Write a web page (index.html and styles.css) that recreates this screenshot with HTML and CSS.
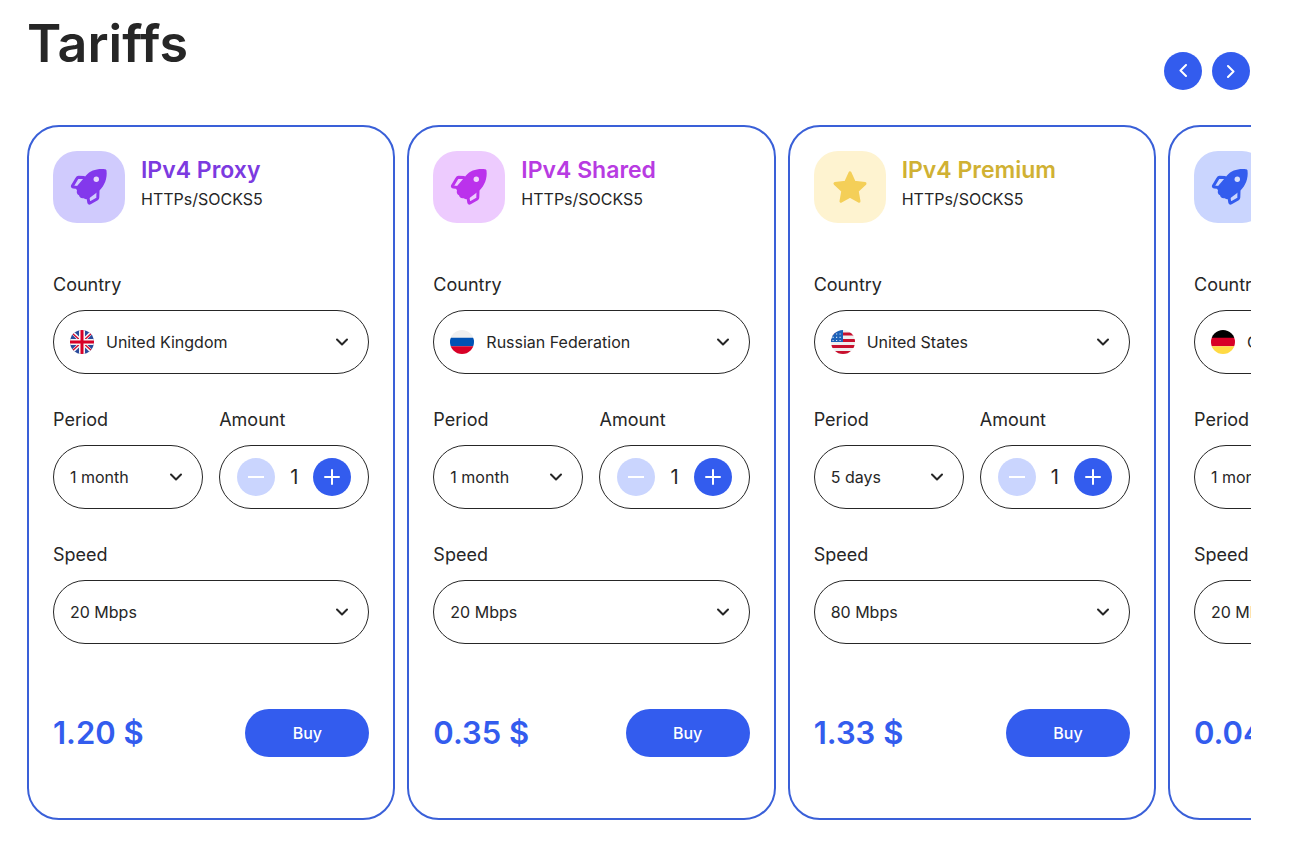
FILE: index.html
```html
<!DOCTYPE html>
<html lang="en">
<head>
<meta charset="utf-8">
<title>Tariffs</title>
<link rel="stylesheet" href="styles.css">
</head>
<body>
<svg class="sprite" aria-hidden="true">
  <symbol id="rocket" viewBox="0 0 40 40">
    <path fill="currentColor" d="M36 2.200C28 1.400 21.500 3.300 17 8.500L8.500 18.500C6.800 20.500 6.800 22 8 23.500C7.300 25.500 8 27.500 10 28.300C10.500 30.500 12.500 31.800 14.800 31.200C16.500 32.600 18.500 32.400 20.500 31L30.500 23.500C35.500 18.500 38.500 11.500 37.500 3.500Q37.200 2.300 36 2.200Z"/>
    <circle class="window" cx="27.300" cy="12.300" r="2.700"/>
    <path class="fin" d="M15 10.500L9.500 10.300Q8.500 10.300 8 11.200L3.500 18.700Q3 19.800 4.200 20L9 20.500M29 24L28.800 30.500Q28.800 31.500 28 32L21 36Q20 36.500 19.800 35.500L19 30.500"/>
  </symbol>
  <symbol id="star" viewBox="0 0 40 40">
    <path fill="currentColor" stroke="currentColor" stroke-width="3" stroke-linejoin="round" d="M20 5.800L24.200 15.200L35 16.600L27.200 23.900L29 34.200L20 29.300L11 34.200L12.800 23.900L5 16.600L15.800 15.200Z"/>
  </symbol>
  <symbol id="chevron" viewBox="0 0 14 14"><path class="line" d="M2 4.500L7 9.500L12 4.500"/></symbol>
  <symbol id="left" viewBox="0 0 14 14"><path class="line" d="M10 1L4.500 6.500L10 12"/></symbol>
  <symbol id="right" viewBox="0 0 14 14"><path class="line" d="M4 2L9.500 7.500L4 13"/></symbol>
  <symbol id="minus" viewBox="0 0 16 16"><path class="line" d="M0.500 8H15.500"/></symbol>
  <symbol id="plus" viewBox="0 0 16 16"><path class="line" d="M1 8H15M8 1V15"/></symbol>
  <clipPath id="round"><circle cx="12" cy="12" r="12"/></clipPath>
  <symbol id="gb" viewBox="0 0 24 24"><g clip-path="url(#round)">
    <path fill="#2a4b9b" d="M0 0H24V24H0Z"/>
    <path stroke="#f4f4f4" stroke-width="3.400" d="M2 2L22 22M22 2L2 22"/>
    <path stroke="#d80027" stroke-width="1.200" d="M2 3L22 21M22 3L2 21"/>
    <path stroke="#f4f4f4" stroke-width="6" d="M12 0V24M0 12H24"/>
    <path stroke="#d80027" stroke-width="3" d="M12 0V24M0 12H24"/></g></symbol>
  <symbol id="ru" viewBox="0 0 24 24"><g clip-path="url(#round)">
    <path fill="#f0f0f0" d="M0 0H24V8H0Z"/><path fill="#0052b4" d="M0 7.800H24V16.200H0Z"/><path fill="#d80027" d="M0 16.200H24V24H0Z"/></g></symbol>
  <symbol id="de" viewBox="0 0 24 24"><g clip-path="url(#round)">
    <path fill="#000" d="M0 0H24V8H0Z"/><path fill="#d80027" d="M0 7.800H24V16.200H0Z"/><path fill="#ffda44" d="M0 16.200H24V24H0Z"/></g></symbol>
  <symbol id="us" viewBox="0 0 24 24"><g clip-path="url(#round)">
    <path fill="#f0f0f0" d="M0 0H24V24H0Z"/>
    <path stroke="#c8102e" stroke-width="3" d="M0 4H24M0 10.500H24M0 16.500H24M0 22.500H24"/>
    <path fill="#1d62b8" d="M0 0H12V12H0Z"/>
    <path stroke="#cfe0f5" stroke-width="1.200" stroke-dasharray="1.200 2.300" d="M1.500 4H12M1.500 7.300H12M1.500 10.500H12"/></g></symbol>
</svg>
<main class="tariffs">
  <header class="head">
    <h1 class="title">Tariffs</h1>
    <nav class="arrows" aria-label="Tariff slider">
      <button class="round" type="button" aria-label="Previous"><svg class="arrow"><use href="#left"/></svg></button>
      <button class="round" type="button" aria-label="Next"><svg class="arrow"><use href="#right"/></svg></button>
    </nav>
  </header>
  <div class="slider" id="slider"></div>
</main>
<script src="script.js"></script>
</body>
</html>
```
FILE: styles.css
```css
* { box-sizing: border-box; }
body {
  margin: 0;
  background: #fff;
  color: #262626;
  font-family: Inter, "Liberation Sans", sans-serif;
  font-size: 16px;
}
button, select { font: inherit; color: inherit; }
button { border: 0; padding: 0; cursor: pointer; }
.sprite { position: absolute; width: 0; height: 0; }
.line { fill: none; stroke: currentColor; stroke-width: 2; stroke-linecap: round; stroke-linejoin: round; }
.tariffs { padding: 8px 60px 24px 27px; }
.head { display: flex; justify-content: space-between; align-items: flex-end; padding-bottom: 35px; }
.title { margin: 0 0 10px; font-size: 52px; line-height: 72px; font-weight: 600; }
.arrows { display: flex; gap: 10px; padding-right: 1px; }
.round {
  display: grid;
  place-items: center;
  width: 38px;
  height: 38px;
  border-radius: 50%;
  background: #335cee;
  color: #fff;
}
.round:disabled { background: #cad5fe; cursor: default; }
.arrow { width: 14px; height: 14px; }
.slider {
  display: grid;
  grid-auto-flow: column;
  grid-auto-columns: calc((100% - 119px) / 3);
  gap: 12px;
  overflow: hidden;
}
.card {
  display: flex;
  flex-direction: column;
  border: 2px solid #3a60d8;
  border-radius: 32px;
  padding: 24px 24px 61px;
}
.top { display: flex; gap: 16px; margin-bottom: 48px; }
.badge {
  display: grid;
  place-items: center;
  width: 72px;
  height: 72px;
  border-radius: 24px;
}
.badge svg { width: 40px; height: 40px; }
.fin { fill: none; stroke: currentColor; stroke-width: 3; stroke-linejoin: round; stroke-linecap: round; }
.violet .badge { background: #d0cbfd; color: #8338ec; }
.violet .name { color: #7c3ae0; }
.pink .badge { background: #edcbfe; color: #bb32ec; }
.pink .name { color: #b83be2; }
.gold .badge { background: #fef3d0; color: #f4cf58; }
.gold .name { color: #d0b133; }
.blue .badge { background: #cad5fe; color: #335cee; }
.blue .name { color: #335cee; }
.window { fill: #fff; opacity: 0.8; }
.name { margin: 2px 0 0; font-size: 23px; line-height: 34px; font-weight: 600; white-space: nowrap; }
.protocol { margin: 0; font-size: 16px; line-height: 24px; }
.fields { display: grid; grid-template-columns: 1fr 1fr; gap: 32px 16px; margin-bottom: 65px; }
.field { min-width: 0; }
.wide { grid-column: 1 / -1; }
.label { display: block; margin-bottom: 12px; font-size: 18px; line-height: 27px; }
.box {
  display: flex;
  align-items: center;
  height: 64px;
  border: 1px solid #262626;
  border-radius: 32px;
}
.pick { display: grid; align-items: center; }
.pick > * { grid-area: 1 / 1; }
.pick select {
  appearance: none;
  width: 100%;
  height: 100%;
  border: 0;
  border-radius: 32px;
  padding: 0 40px 0 16px;
  background: transparent;
}
.pick .flag { width: 24px; height: 24px; margin-left: 16px; pointer-events: none; }
.flagged select { padding-left: 52px; }
.pick .caret { width: 14px; height: 14px; margin-right: 19px; justify-self: end; pointer-events: none; }
.count { justify-content: space-between; padding: 0 17px; }
.count svg { width: 16px; height: 16px; }
.amount { font-size: 20px; line-height: 24px; }
.bottom { display: flex; justify-content: space-between; align-items: center; }
.price { color: #335cee; font-size: 31px; line-height: 48px; font-weight: 600; white-space: nowrap; }
.buy {
  width: 124px;
  height: 48px;
  border-radius: 24px;
  background: #335cee;
  color: #fff;
  font-weight: 500;
}
```
FILE: script.js
```javascript
const tariffs = [
  { tone: "violet", icon: "rocket", name: "IPv4 Proxy", flag: "gb", country: "United Kingdom", period: "1 month", speed: "20 Mbps", price: "1.20 $" },
  { tone: "pink", icon: "rocket", name: "IPv4 Shared", flag: "ru", country: "Russian Federation", period: "1 month", speed: "20 Mbps", price: "0.35 $" },
  { tone: "gold", icon: "star", name: "IPv4 Premium", flag: "us", country: "United States", period: "5 days", speed: "80 Mbps", price: "1.33 $" },
  { tone: "blue", icon: "rocket", name: "IPv6 Proxy", flag: "de", country: "Germany", period: "1 month", speed: "20 Mbps", price: "0.04 $" }
];

const picker = (id, label, value, wide, flag) => `
  <div class="field ${wide ? "wide" : ""}">
    <label class="label" for="${id}">${label}</label>
    <div class="box pick ${flag ? "flagged" : ""}">
      <select id="${id}"><option>${value}</option></select>
      ${flag ? `<svg class="flag"><use href="#${flag}"/></svg>` : ""}
      <svg class="caret"><use href="#chevron"/></svg>
    </div>
  </div>`;

document.getElementById("slider").innerHTML = tariffs.map((t, i) => `
  <article class="card ${t.tone}">
    <div class="top">
      <div class="badge"><svg><use href="#${t.icon}"/></svg></div>
      <div><h2 class="name">${t.name}</h2><p class="protocol">HTTPs/SOCKS5</p></div>
    </div>
    <div class="fields">
      ${picker("country" + i, "Country", t.country, true, t.flag)}
      ${picker("period" + i, "Period", t.period, false)}
      <div class="field">
        <span class="label" id="amount${i}">Amount</span>
        <div class="box count" role="group" aria-labelledby="amount${i}">
          <button class="round" type="button" aria-label="Less" disabled><svg><use href="#minus"/></svg></button>
          <output class="amount">1</output>
          <button class="round" type="button" aria-label="More"><svg><use href="#plus"/></svg></button>
        </div>
      </div>
      ${picker("speed" + i, "Speed", t.speed, true)}
    </div>
    <div class="bottom"><span class="price">${t.price}</span><button class="buy" type="button">Buy</button></div>
  </article>`).join("");
```
